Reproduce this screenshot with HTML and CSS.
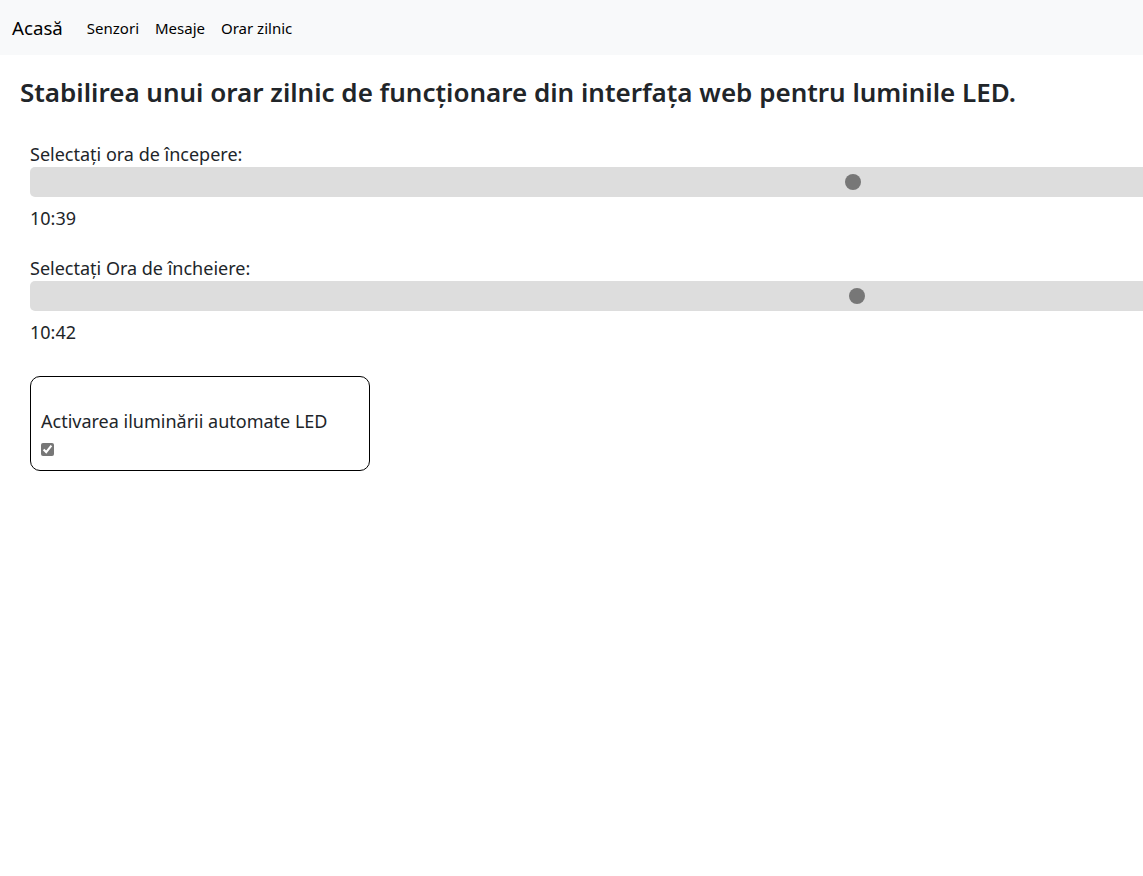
FILE: index.html
```html
<!DOCTYPE html>
<html lang="ro">
<head>
<meta charset="utf-8">
<title>Orar zilnic</title>
<link rel="stylesheet" href="styles.css">
</head>
<body>
<nav class="navbar">
  <a class="brand" href="#">Acasă</a>
  <ul class="nav-links">
    <li><a href="#">Senzori</a></li>
    <li><a href="#">Mesaje</a></li>
    <li><a href="#">Orar zilnic</a></li>
  </ul>
</nav>
<main class="page">
  <h1 class="title">Stabilirea unui orar zilnic de funcționare din interfața web pentru luminile LED.</h1>
  <form class="schedule">
    <div class="field">
      <label class="field-label" for="start">Selectați ora de începere:</label>
      <input class="slider" type="range" id="start" min="0" max="1439" value="639">
      <p class="time">10:39</p>
    </div>
    <div class="field">
      <label class="field-label" for="end">Selectați Ora de încheiere:</label>
      <input class="slider" type="range" id="end" min="0" max="1439" value="642">
      <p class="time">10:42</p>
    </div>
    <div class="auto-box">
      <label class="auto-label" for="auto">Activarea iluminării automate LED</label>
      <input class="auto-check" type="checkbox" id="auto" checked>
    </div>
  </form>
</main>
</body>
</html>
```
FILE: styles.css
```css
html, body {
  overflow-x: hidden;
}
body {
  margin: 0;
  font-family: "Noto Sans", "Open Sans", sans-serif;
  color: #212529;
  background: #fff;
}
.navbar {
  height: 55px;
  background: #f8f9fa;
  display: flex;
  align-items: center;
  padding: 0 12px;
  box-sizing: border-box;
}
.brand {
  font-size: 18.7px;
  color: #000;
  text-decoration: none;
  margin-right: 24px;
  margin-top: -1px;
}
.nav-links {
  list-style: none;
  display: flex;
  gap: 16px;
  margin: 0;
  padding: 0;
}
.nav-links a {
  font-size: 15px;
  color: #000;
  text-decoration: none;
}
.page {
  padding: 0 20px;
}
.title {
  font-size: 26px;
  font-weight: 600;
  margin: 22px 0 0;
  line-height: 1.2;
  white-space: nowrap;
}
.schedule {
  padding: 0 10px;
  margin-top: 34px;
}
.field {
  display: flex;
  flex-direction: column;
  align-items: flex-start;
}
.field-label {
  font-size: 18px;
  line-height: 25px;
}
.slider {
  -webkit-appearance: none;
  appearance: none;
  width: 1851px;
  max-width: none;
  height: 30px;
  margin: 0;
  background: #dddddd;
  border-radius: 5px;
  outline: none;
}
.slider::-webkit-slider-thumb {
  -webkit-appearance: none;
  appearance: none;
  width: 16px;
  height: 16px;
  border-radius: 50%;
  background: #777777;
  border: none;
}
.time {
  font-size: 18px;
  line-height: 24px;
  margin: 9px 0 26px;
}
.auto-box {
  width: 340px;
  box-sizing: border-box;
  border: 1px solid #000;
  border-radius: 10px;
  padding: 32px 10px 14px;
  margin-top: 6px;
  display: flex;
  flex-direction: column;
  align-items: flex-start;
}
.auto-label {
  font-size: 18px;
  line-height: 24px;
}
.auto-check {
  margin: 10px 0 0;
  width: 13px;
  height: 13px;
  accent-color: #777;
}
```
